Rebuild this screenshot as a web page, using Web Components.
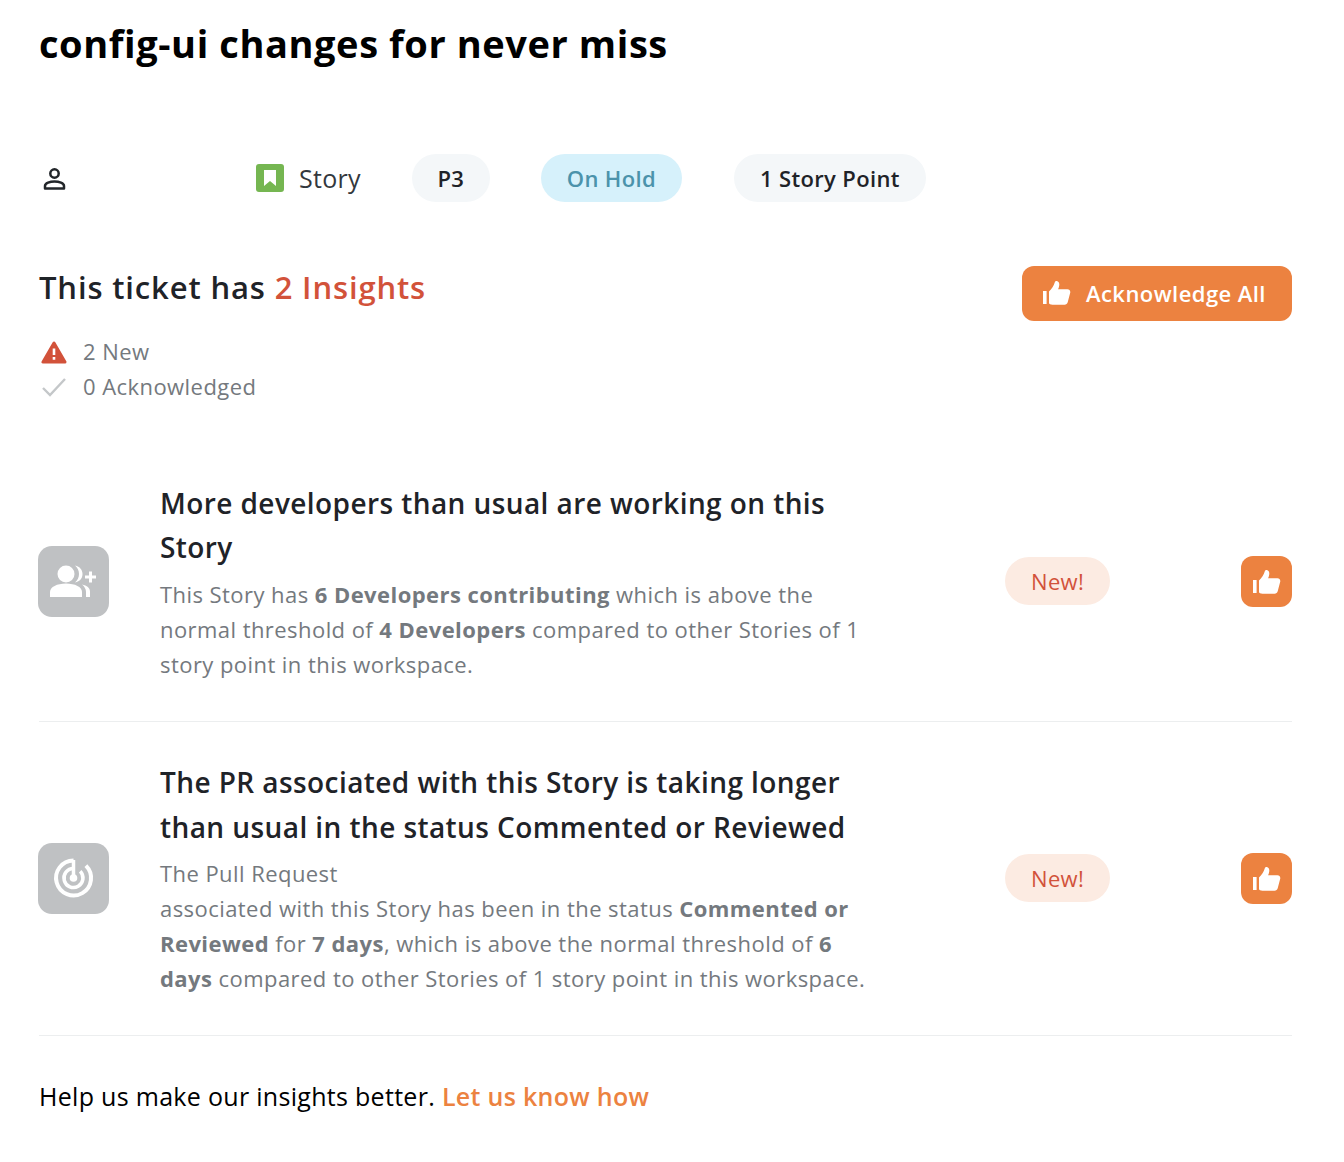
<!DOCTYPE html>
<html lang="en">
<head>
<meta charset="utf-8">
<title>Insights</title>
<style>
  html, body { margin: 0; background: #fff; }
  body { font-family: "Open Sans", "Liberation Sans", sans-serif; }
</style>
</head>
<body>

<ticket-insights></ticket-insights>

<script>
// Small helper so every element can set up its shadow root the same way.
function makeTemplate (html) {
  const template = document.createElement('template')
  template.innerHTML = html
  return template
}

const thumbSvg = (w, h) => `<svg width="${w}" height="${h}" viewBox="0 0 28 24"><path fill="#fff" d="M0 10h3.600v13H0zM6 22.200V10.400c2.600-2.400 5-5.600 5.800-9.200.2-.9 1-1.400 2-1.200 1.800.4 2.600 2 2.500 3.900-.1 1.500-.6 3-1.200 4.300h9.400c1.900 0 3.200 1.700 2.700 3.500l-2.500 9.600c-.4 1.500-1.600 2.400-3.100 2.400H9.500c-1.900 0-3.500-.6-3.500-1.700z"/></svg>`

const pillTemplate = makeTemplate(`
  <style>
    :host {
      display: inline-flex;
      align-items: center;
      height: 48px;
      padding: 0 26px;
      border-radius: 24px;
      background: #f4f7f9;
      color: #1f2328;
      font-size: 22px;
      font-weight: 600;
      letter-spacing: 0.35px;
      box-sizing: border-box;
    }
    :host([kind="status"]) { background: #d6f1fb; color: #4b93ab; }
    :host([kind="new"]) {
      background: #fcebe2;
      color: #d2523a;
      font-weight: 400;
    }
  </style>
  <slot></slot>
`)

customElements.define('status-pill', class extends HTMLElement {
  constructor () {
    super()
    this.attachShadow({ mode: 'open' }).appendChild(pillTemplate.content.cloneNode(true))
  }
})

const metaTemplate = makeTemplate(`
  <style>
    :host { display: flex; align-items: center; height: 48px; color: #1f2328; }
    .person { width: 217px; display: flex; padding-left: 4px; box-sizing: border-box; }
    .type { display: flex; align-items: center; gap: 15px; font-size: 25px; letter-spacing: 0.3px; color: #33383d; margin-right: 51px; }
    .status { margin: 0 52px 0 51px; }
  </style>
  <div class="person">
    <svg width="23" height="23" viewBox="0 0 23 23" fill="none" stroke="#22262a" stroke-width="2.500">
      <circle cx="11.500" cy="6.500" r="4.200"/>
      <path d="M2 21.500v-2.600c0-2.800 5-4.400 9.500-4.400s9.500 1.600 9.500 4.400v2.600z" stroke-linejoin="round"/>
    </svg>
  </div>
  <div class="type">
    <svg width="28" height="28" viewBox="0 0 28 28">
      <rect width="28" height="28" rx="3" fill="#75b651"/>
      <path fill="#fff" d="M8 6h12v16l-6-5-6 5z"/>
    </svg>
    <span>Story</span>
  </div>
  <status-pill style="padding: 0 25.500px">P3</status-pill>
  <status-pill class="status" kind="status">On Hold</status-pill>
  <status-pill>1 Story Point</status-pill>
`)

customElements.define('ticket-meta', class extends HTMLElement {
  constructor () {
    super()
    this.attachShadow({ mode: 'open' }).appendChild(metaTemplate.content.cloneNode(true))
  }
})

const summaryTemplate = makeTemplate(`
  <style>
    :host { display: flex; justify-content: space-between; align-items: flex-start; }
    h2 { margin: -1px 0 0; font-size: 31px; font-weight: 600; line-height: 44px; letter-spacing: 0.85px; color: #1f2328; }
    h2 span { color: #d2523a; }
    .counts { margin-top: 25px; font-size: 22px; line-height: 35px; color: #74797e; letter-spacing: 0.44px; }
    .counts div { display: flex; align-items: center; gap: 16px; }
    .counts svg { flex: none; margin-left: 2px; }
    button {
      display: flex;
      align-items: center;
      gap: 15px;
      width: 270px;
      height: 55px;
      padding: 0 0 2px 21px;
      border: 0;
      border-radius: 12px;
      background: #ec8240;
      color: #fff;
      font: 600 22px "Open Sans", sans-serif;
      letter-spacing: 0.44px;
      box-sizing: border-box;
    }
  </style>
  <div>
    <h2>This ticket has <span>2 Insights</span></h2>
    <div class="counts">
      <div>
        <svg width="26" height="24" viewBox="0 0 26 24">
          <path fill="#d2523a" stroke="#d2523a" stroke-width="3" stroke-linejoin="round" d="M13 3 2 22h22z"/>
          <path fill="#fff" d="M11.700 8.500h2.600v6.500h-2.600zM11.700 17h2.600v2.800h-2.600z"/>
        </svg>
        <span>2 New</span>
      </div>
      <div>
        <svg width="26" height="24" viewBox="0 0 26 24" fill="none" stroke="#c4c7c9" stroke-width="2.400">
          <path d="M2 13l7 7L24 4"/>
        </svg>
        <span>0 Acknowledged</span>
      </div>
    </div>
  </div>
  <button>${thumbSvg(28, 24)}<span>Acknowledge All</span></button>
`)

customElements.define('insight-summary', class extends HTMLElement {
  constructor () {
    super()
    this.attachShadow({ mode: 'open' }).appendChild(summaryTemplate.content.cloneNode(true))
  }
})

const rowTemplate = makeTemplate(`
  <style>
    :host {
      display: grid;
      grid-template-columns: 71px 722px 1fr 51px;
      align-items: center;
      border-bottom: 1px solid #eceeef;
      padding: 39px 0;
    }
    .icon {
      width: 71px;
      height: 71px;
      margin-left: -1px;
      border-radius: 14px;
      background: #bfc1c3;
      display: flex;
    }
    .text { margin-left: 50px; width: 720px; }
    h3 {
      margin: var(--title-shift, 0) 0 var(--title-gap, 8px);
      font-size: 28px;
      line-height: var(--title-line, 44px);
      font-weight: 600;
      letter-spacing: 0.42px;
      color: #1f2328;
    }
    .body { font-size: 22px; line-height: 35px; letter-spacing: 0.44px; color: #74797e; }
    .badge { margin: 0 0 2px 173px; justify-self: start; }
    .ack {
      width: 51px;
      height: 51px;
      border: 0;
      padding: 0;
      border-radius: 12px;
      background: #ec8240;
      display: flex;
      align-items: center;
      justify-content: center;
    }
  </style>
  <div class="icon"><slot name="icon"></slot></div>
  <div class="text">
    <h3><slot name="title"></slot></h3>
    <div class="body"><slot></slot></div>
  </div>
  <status-pill class="badge" kind="new">New!</status-pill>
  <button class="ack">${thumbSvg(28, 24)}</button>
`)

customElements.define('insight-row', class extends HTMLElement {
  constructor () {
    super()
    this.attachShadow({ mode: 'open' }).appendChild(rowTemplate.content.cloneNode(true))
  }
})

const pageTemplate = makeTemplate(`
  <style>
    :host { display: block; padding: 17px 52px 0 39px; color: #000; }
    h1 { margin: 0; font-size: 38px; line-height: 52px; font-weight: 700; letter-spacing: 0.58px; }
    ticket-meta { margin-top: 85px; }
    insight-summary { margin-top: 64px; }
    .rows { margin-top: 38px; }
    .pr-row { --title-shift: -1px; --title-gap: 6px; --title-line: 45px; }
    footer { margin-top: 41px; font-size: 25px; line-height: 38px; letter-spacing: 0.3px; }
    footer a { color: #ec8240; font-weight: 600; text-decoration: none; }
  </style>
  <h1>config-ui changes for never miss</h1>
  <ticket-meta></ticket-meta>
  <insight-summary></insight-summary>
  <div class="rows">
    <insight-row>
      <svg slot="icon" width="71" height="71" viewBox="0 0 71 71">
        <circle cx="28" cy="28" r="8.500" fill="#fff"/>
        <path fill="#fff" d="M12 51v-5c0-5 7-8.500 16-8.500s16 3.500 16 8.500v5z"/>
        <path fill="#fff" d="M37 19.500c5 1 7.500 4.500 7.500 8.500s-2.500 7.500-7.500 8.500c2.500-2 4-5 4-8.500s-1.500-6.500-4-8.500z"/>
        <path fill="#fff" d="M44 38.500c5 1 8 3.500 8 7V51h-4v-5c0-3-1.500-5.500-4-7.500z"/>
        <path fill="#fff" d="M47 29.500h11v3H47zM51 25.500h3v11h-3z"/>
      </svg>
      <span slot="title">More developers than usual are working on this Story</span>
      This Story has <b>6 Developers contributing</b> which is above the normal threshold of <b>4 Developers</b> compared to other Stories of 1 story point in this workspace.
    </insight-row>
    <insight-row class="pr-row">
      <svg slot="icon" width="71" height="71" viewBox="0 0 71 71" fill="none" stroke="#fff">
        <path stroke-width="4" d="M35.500 17.500a17.500 17.500 0 1 0 12.400 5.100"/>
        <path stroke-width="3.500" d="M35.500 25.500a9.500 9.500 0 1 0 6.700 2.800"/>
        <circle cx="35.500" cy="35" r="3.800" fill="#fff" stroke="none"/>
        <path stroke-width="3.500" d="M35.500 17v18"/>
      </svg>
      <span slot="title">The PR associated with this Story is taking longer than usual in the status Commented or Reviewed</span>
      The Pull Request<br>associated with this Story has been in the status <b>Commented or Reviewed</b> for <b>7 days</b>, which is above the normal threshold of <b>6 days</b> compared to other Stories of 1 story point in this workspace.
    </insight-row>
  </div>
  <footer>Help us make our insights better. <a href="#">Let us know how</a></footer>
`)

customElements.define('ticket-insights', class extends HTMLElement {
  constructor () {
    super()
    this.attachShadow({ mode: 'open' }).appendChild(pageTemplate.content.cloneNode(true))
  }
})
</script>
</body>
</html>
